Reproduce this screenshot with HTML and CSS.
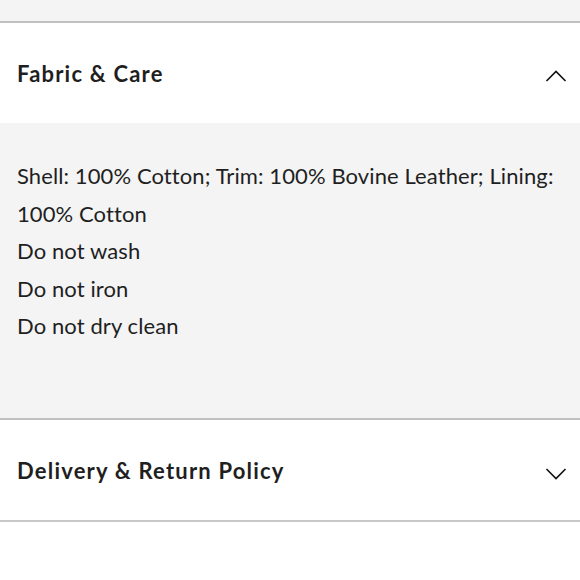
FILE: index.html
```html
<!DOCTYPE html>
<html>
<head>
<meta charset="utf-8">
<link rel="stylesheet" href="styles.css">
</head>
<body>
<div class="page">
  <div class="top-strip"></div>
  <section class="acc open">
    <div class="acc-head">
      <h2 class="acc-title">Fabric &amp; Care</h2>
      <svg class="chev" width="22" height="12" viewBox="0 0 22 12"><path d="M1.5 11 L11 1.5 L20.5 11" fill="none" stroke="#111" stroke-width="1.6"/></svg>
    </div>
    <div class="acc-body">
      <p>Shell: 100% Cotton; Trim: 100% Bovine Leather; Lining: 100% Cotton</p>
      <p>Do not wash</p>
      <p>Do not iron</p>
      <p>Do not dry clean</p>
    </div>
  </section>
  <section class="acc">
    <div class="acc-head">
      <h2 class="acc-title">Delivery &amp; Return Policy</h2>
      <svg class="chev down" width="22" height="12" viewBox="0 0 22 12"><path d="M1.5 1 L11 10.5 L20.5 1" fill="none" stroke="#111" stroke-width="1.6"/></svg>
    </div>
  </section>
</div>
</body>
</html>
```
FILE: styles.css
```css
* { box-sizing: border-box; }
html, body { margin: 0; padding: 0; background: #fff; }
body { font-family: Lato, "Noto Sans", sans-serif; color: #1f1f1f; }
.page { width: 580px; }
.top-strip { height: 21px; background: #f4f4f4; }
.acc { border-top: 2px solid #c0c0c0; }
.acc:last-child { border-bottom: 2px solid #c8c8c8; }
.acc-head {
  height: 100px;
  display: flex;
  align-items: center;
  justify-content: space-between;
  padding: 0 13px 0 17px;
  background: #fff;
}
.acc-title { margin: 0; font-size: 22px; font-weight: 700; letter-spacing: 1.2px; }
.acc.open + .acc .acc-head { padding-top: 2px; }
.chev { display: block; margin-top: 6px; }
.acc-body {
  background: #f4f4f4;
  padding: 34px 17px 73px 17px;
  font-size: 22px;
  line-height: 37.5px;
  letter-spacing: 0.1px;
}
.acc-body p { margin: 0; }
```
